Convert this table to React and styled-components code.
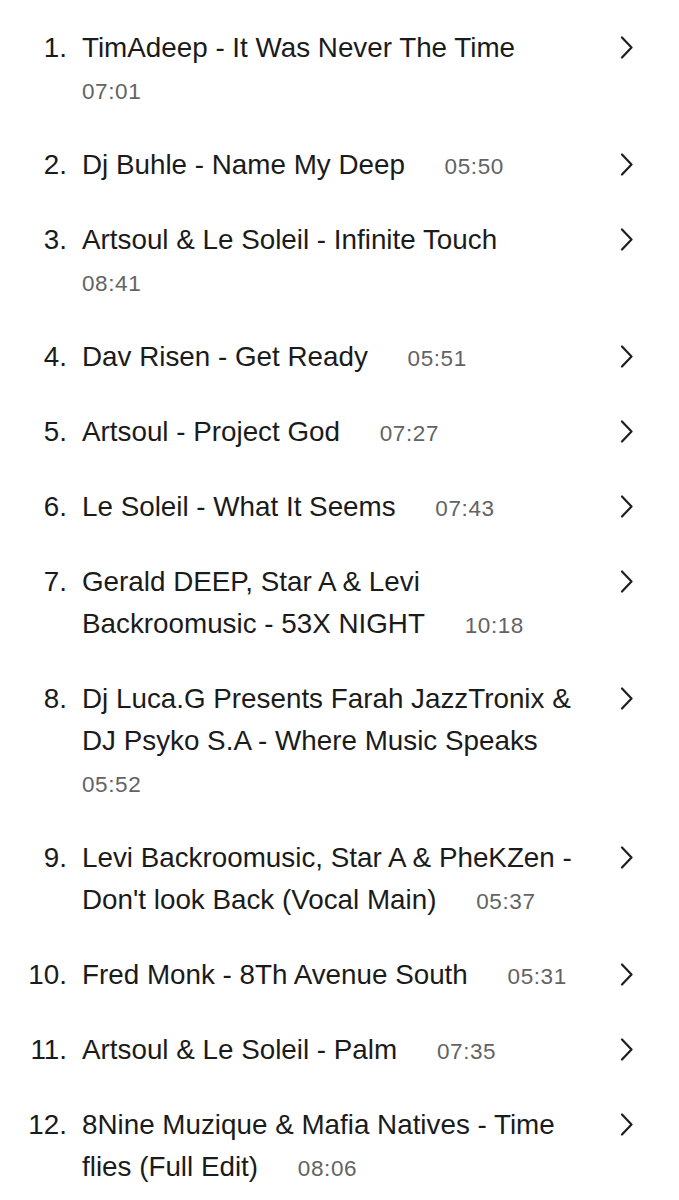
import React from "react";
import styled, { createGlobalStyle } from "styled-components";

const GlobalStyle = createGlobalStyle`
  body {
    margin: 0;
    background: #fff;
    font-family: "Liberation Sans", Arial, sans-serif;
    -webkit-font-smoothing: antialiased;
  }
`;

const tracks = [
  { title: "TimAdeep - It Was Never The Time", time: "07:01" },
  { title: "Dj Buhle - Name My Deep", time: "05:50" },
  { title: "Artsoul & Le Soleil - Infinite Touch", time: "08:41" },
  { title: "Dav Risen - Get Ready", time: "05:51" },
  { title: "Artsoul - Project God", time: "07:27" },
  { title: "Le Soleil - What It Seems", time: "07:43" },
  { title: "Gerald DEEP, Star A & Levi Backroomusic - 53X NIGHT", time: "10:18" },
  { title: "Dj Luca.G Presents Farah JazzTronix & DJ Psyko S.A - Where Music Speaks", time: "05:52" },
  { title: "Levi Backroomusic, Star A & PheKZen - Don't look Back (Vocal Main)", time: "05:37" },
  { title: "Fred Monk - 8Th Avenue South", time: "05:31" },
  { title: "Artsoul & Le Soleil - Palm", time: "07:35" },
  { title: "8Nine Muzique & Mafia Natives - Time flies (Full Edit)", time: "08:06" },
];

const List = styled.ol`
  list-style: none;
  margin: 0;
  padding: 11px 0 0;
`;

const Row = styled.li`
  display: flex;
  align-items: flex-start;
  padding: 16px 0 17px;
  line-height: 42px;
  color: #1b1b1b;
  font-size: 27.8px;
`;

const Num = styled.span`
  width: 67px;
  flex: none;
  text-align: right;
`;

const Title = styled.div`
  width: 500px;
  margin-left: 15px;
  flex: none;
`;

/* trailing space hangs at a line end, so the gap vanishes when the time wraps */
const Gap = styled.span`
  word-spacing: 32px;
`;

const Time = styled.span`
  font-size: 22.5px;
  line-height: 1;
  letter-spacing: 0.6px;
  color: #636363;
`;

const Chevron = styled.svg`
  flex: none;
  margin-left: 36px;
  margin-top: 8px;
  width: 16px;
  height: 24px;
`;

const Arrow = () => (
  <Chevron viewBox="0 0 16 24" fill="none">
    <path
      d="M4 2.5 L13.5 12.5 L4 22.5"
      stroke="#1f1f1f"
      strokeWidth="2.2"
      strokeLinecap="round"
      strokeLinejoin="round"
    />
  </Chevron>
);

export default function App() {
  return (
    <>
      <GlobalStyle />
      <List>
        {tracks.map((t, i) => (
          <Row key={i}>
            <Num>{i + 1}.</Num>
            <Title>
              {t.title}
              <Gap> </Gap>
              <Time>{t.time}</Time>
            </Title>
            <Arrow />
          </Row>
        ))}
      </List>
    </>
  );
}
